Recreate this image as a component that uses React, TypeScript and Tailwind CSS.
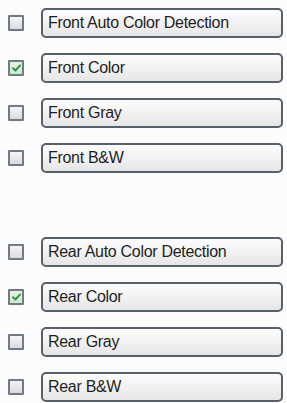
import React from "react"

interface Option {
  label: string
  checked: boolean
}

const front: Option[] = [
  { label: "Front Auto Color Detection", checked: false },
  { label: "Front Color", checked: true },
  { label: "Front Gray", checked: false },
  { label: "Front B&W", checked: false },
]

const rear: Option[] = [
  { label: "Rear Auto Color Detection", checked: false },
  { label: "Rear Color", checked: true },
  { label: "Rear Gray", checked: false },
  { label: "Rear B&W", checked: false },
]

function Row({ label, checked }: Option) {
  return (
    <div className="flex items-center h-[30px]">
      <div className="w-[41px] flex items-center">
        <div
          className={
            "ml-[8px] w-[16px] h-[16px] border-[2px] border-[#6f7b88] rounded-[1px] flex items-center justify-center " +
            (checked ? "bg-gradient-to-b from-[#e6f2e6] to-[#d2e6d2]" : "bg-gradient-to-b from-[#f4f4f4] to-[#dcdcdc]")
          }
        >
          {checked && (
            <svg width="9" height="8" viewBox="0 0 9 8">
              <path d="M1 4.2 L3.4 6.5 L8 1.5" fill="none" stroke="#2f9a3c" strokeWidth="2" strokeLinecap="round" strokeLinejoin="round" />
            </svg>
          )}
        </div>
      </div>
      <div className="flex-1 mr-[4px] h-[30px] flex items-center px-[5px] border-[2px] border-[#56616c] rounded-[5px] bg-gradient-to-b from-[#fdfdfd] to-[#e6e6e6] text-[16px] leading-none tracking-[-0.3px] text-[#1f1f1f] font-['Liberation_Sans',Arial,sans-serif]">
        {label}
      </div>
    </div>
  )
}

export default function App() {
  return (
    <div className="w-[287px] h-[403px] overflow-hidden bg-[#fcfcfc] pt-[8px]">
      <div className="flex flex-col gap-[15px]">
        {front.map((o) => (
          <Row key={o.label} {...o} />
        ))}
      </div>
      <div className="flex flex-col gap-[15px] mt-[64px]">
        {rear.map((o) => (
          <Row key={o.label} {...o} />
        ))}
      </div>
    </div>
  )
}
